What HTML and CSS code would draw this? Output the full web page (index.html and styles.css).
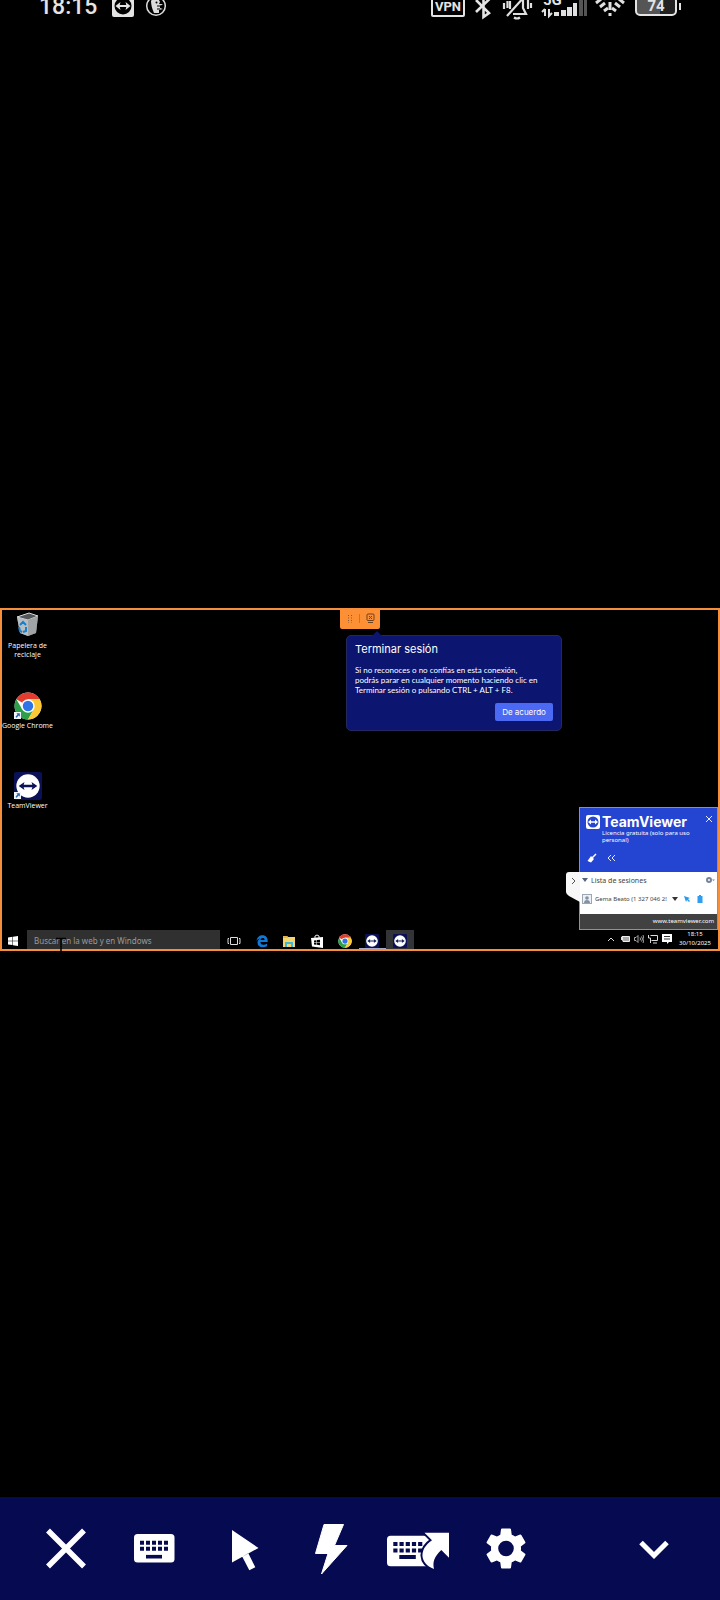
FILE: index.html
```html
<!DOCTYPE html>
<html lang="es">
<head>
<meta charset="utf-8">
<meta name="viewport" content="width=device-width, initial-scale=1">
<title>TeamViewer</title>
<link rel="stylesheet" href="styles.css">
</head>
<body>
<svg class="defs" width="0" height="0" aria-hidden="true">
  <symbol id="chrome" viewBox="0 0 48 48">
    <circle cx="24" cy="24" r="23" fill="#fff"/>
    <path d="M24 24 4 12.500A23 23 0 0 1 44 12.500H24Z" fill="#e33b2e"/>
    <path d="M4 12.500A23 23 0 0 0 24 47L34 29.500 24 24 14 29.500Z" fill="#2c9f48"/>
    <path d="M44 12.500A23 23 0 0 1 24 47L34 29.500 24 12.500Z" fill="#fcc934"/>
    <circle cx="24" cy="24" r="11.500" fill="#fff"/>
    <circle cx="24" cy="24" r="9" fill="#2f74e6"/>
  </symbol>
  <symbol id="tv" viewBox="0 0 48 48">
    <rect width="48" height="48" rx="4" fill="#0b1157"/>
    <circle cx="24" cy="24" r="20" fill="#fff"/>
    <path d="M8 24l10-7-1.500 5h15L30 17l10 7-10 7 1.500-5h-15l1.500 5z" fill="#0b1157"/>
  </symbol>
  <symbol id="shortcut" viewBox="0 0 12 12">
    <rect width="12" height="12" fill="#f2f6fa"/>
    <path d="M4 2h6v6L8 6 4.500 10 2.500 8.500 6 4z" fill="#2462b0"/>
  </symbol>
</svg>

<div class="screen">
  <header class="status">
    <div class="status-row">
      <time class="status-time">18:15</time>
      <svg class="status-tv" viewBox="0 0 22 30" width="22" height="30">
        <rect y="3" width="22" height="22" rx="2" fill="#e4e4e4"/>
        <circle cx="11" cy="14" r="8.500" fill="#000"/>
        <path d="M3.500 14l5-4-.8 3h6.600l-.8-3 5 4-5 4 .8-3H7.700l.8 3z" fill="#e4e4e4"/>
      </svg>
      <svg class="status-duck" viewBox="0 0 22 30" width="22" height="30">
        <circle cx="11" cy="14" r="9.300" fill="none" stroke="#dcdcdc" stroke-width="1.500"/>
        <path d="M9 21C7 17 6 12 6 9c2-4 8-3 9 1l-1 2h4l-3 2v2l3 1-4 1v3z" fill="#dcdcdc"/>
        <circle cx="11.500" cy="10.500" r="1" fill="#000"/>
        <path d="M12 14h4M12 17h3" stroke="#000"/>
      </svg>
      <div class="status-right">
        <span class="vpn">VPN</span>
        <svg viewBox="0 0 24 30" width="24" height="30"><path d="M5 8l13 13-5.500 4V3L18 7.500 5 20" fill="none" stroke="#e4e4e4" stroke-width="2.600"/></svg>
        <svg viewBox="0 0 32 30" width="32" height="30" fill="none" stroke="#e0e0e0" stroke-width="2.200">
          <path d="M6 24 24 4M12 22h13l-3-6V7M9 17V9"/><path d="M13 25.500q3 2 6 0M3 11v6M6.500 9v7M27 8v9M30 11v5"/>
        </svg>
        <span class="signal"><span class="signal-text">5G</span>
          <svg viewBox="0 0 48 30" width="48" height="30" fill="#e0e0e0">
            <path d="M6 17v7M3 20l3-3M10 17v7l3-3" fill="none" stroke="#e0e0e0" stroke-width="2"/>
            <path d="M15 20h5v4h-5zM22 18h5v6h-5zM29 15h4v9h-4z"/><path d="M28 15h5v9h-5zM34 11h4v13h-4z"/><path d="M40 7h4v17h-4zM45 4h3v20h-3z" fill="#555"/>
          </svg></span>
        <svg viewBox="0 0 36 30" width="36" height="30" fill="none" stroke="#e0e0e0">
          <path d="M3 11 8 7M7 15l5-4M11 19l4-3M31 11l-5-4M27 15l-5-4M23 19l-4-3M11 7q6-3 12 0" stroke-width="3"/>
          <path d="M17 10v8M17 21v3" stroke-width="3"/>
        </svg>
        <span class="battery"><span class="battery-body">74</span><span class="battery-nub"></span></span>
      </div>
    </div>
  </header>

  <main class="stage">
    <section class="desktop" aria-label="Escritorio remoto">
      <div class="shortcuts">
        <div class="shortcut">
          <svg viewBox="1 0 28 28" width="28" height="28">
            <path d="M4 5 16 1l9 3-2 17-8 3-8-3z" fill="#8d9194"/>
            <path d="M4 5l11 3 10-4-9-3z" fill="#54585b" stroke="#d7d9da"/>
            <path d="M4 5l11 3v16l-8-3z" fill="#b9bdc0"/>
            <path d="M15 8l10-4-2 17-8 3z" fill="#a1a4a6"/>
            <path d="M7 13l3-3 3 3M13 15v4l-3 1M6 15l1 4 2 1" fill="none" stroke="#1481d0" stroke-width="2"/>
          </svg>
          <span>Papelera de reciclaje</span>
        </div>
        <div class="shortcut">
          <svg viewBox="0 0 28 28" width="28" height="28"><use href="#chrome" width="28" height="28"/><use href="#shortcut" y="20" width="7" height="7"/></svg>
          <span>Google Chrome</span>
        </div>
        <div class="shortcut">
          <svg viewBox="0 0 28 28" width="28" height="28"><use href="#tv" width="28" height="28"/><use href="#shortcut" y="20" width="7" height="7"/></svg>
          <span>TeamViewer</span>
        </div>
      </div>

      <div class="session-tab">
        <svg viewBox="0 0 40 19" width="40" height="19">
          <path d="M8.500 5v8M11.500 5v8" stroke="#8a562f" stroke-dasharray="1 1.500"/>
          <path d="M19.500 4v9" stroke="#c8752f"/>
          <rect x="27" y="4" width="7" height="6.500" rx="1" fill="none" stroke="#6c421e"/>
          <path d="M29 6l3 3M32 6l-3 3M28 12.500h5" stroke="#6c421e"/>
        </svg>
      </div>

      <div class="dialog" role="dialog" aria-labelledby="dialog-title">
        <h1 class="dialog-title" id="dialog-title">Terminar sesión</h1>
        <p class="dialog-text">Si no reconoces o no confías en esta conexión,<br>podrás parar en cualquier momento haciendo clic en<br>Terminar sesión o pulsando CTRL + ALT + F8.</p>
        <button class="dialog-button" type="button">De acuerdo</button>
      </div>

      <aside class="panel">
        <button class="panel-handle" type="button" aria-label="Contraer panel">
          <svg viewBox="0 0 14 30" width="14" height="30"><path d="M0 3q0-3 3-3h11v30L3 24q-3-2-3-4z" fill="#f7f7f7"/><path d="M6 6l3 3-3 3" fill="none" stroke="#555"/></svg>
        </button>
        <div class="panel-head">
          <div class="brand-row">
            <svg viewBox="0 0 14 14" width="14" height="14"><rect width="14" height="14" rx="2" fill="#fff"/><circle cx="7" cy="7" r="5.500" fill="#2747d3"/><path d="M2 7l3-2.500V6.300h4V4.500L12 7 9 9.500V7.700H5v1.800z" fill="#fff"/></svg>
            <strong class="brand">TeamViewer</strong>
            <button class="panel-close" type="button" aria-label="Cerrar"><svg viewBox="0 0 8 8" width="8" height="8"><path d="M1 1l6 6M7 1 1 7" stroke="#e7ebff"/></svg></button>
          </div>
          <p class="license">Licencia gratuita (solo para uso personal)</p>
          <div class="panel-tools">
            <svg viewBox="0 0 10 10" width="10" height="10"><path d="M9 1 5 5" stroke="#fff" stroke-width="1.500"/><path d="M4 3l3 3-3 3.500L.5 8z" fill="#fff"/></svg>
            <svg viewBox="0 0 10 10" width="10" height="10"><path d="M5 2 2 5l3 3M9 2 6 5l3 3" fill="none" stroke="#e7ebff"/></svg>
          </div>
        </div>
        <div class="panel-body">
          <div class="list-head">
            <svg viewBox="0 0 6 6" width="6" height="6"><path d="M0 1h6L3 5z" fill="#52617e"/></svg>
            <span>Lista de sesiones</span>
            <svg class="push" viewBox="0 0 10 8" width="10" height="8"><circle cx="4" cy="4" r="2" fill="none" stroke="#75849c" stroke-width="2"/><path d="M7 3.500h3L8.500 5z" fill="#75849c"/></svg>
          </div>
          <div class="list-item">
            <svg viewBox="0 0 10 10" width="10" height="10"><rect x=".5" y=".5" width="9" height="9" fill="#edf1f5" stroke="#9ba7b3"/><circle cx="5" cy="4" r="1.800" fill="#8292a3"/><path d="M2 9q0-3 3-3t3 3z" fill="#8292a3"/></svg>
            <span class="partner">Gema Beato (1 327 046 2!</span>
            <svg viewBox="0 0 6 6" width="6" height="6"><path d="M0 1h6L3 5z" fill="#333"/></svg>
            <svg viewBox="0 0 8 8" width="8" height="8"><path d="M1 1l6 2-2 1 2 2-1 1-2-2-1 2z" fill="#279be8"/></svg>
            <svg viewBox="0 0 8 8" width="8" height="8"><path d="M1.500 1h5v7h-5z" fill="#2f9df0"/><path d="M3 .5h2" stroke="#2f9df0"/></svg>
          </div>
        </div>
        <a class="panel-foot" href="#">www.teamviewer.com</a>
      </aside>

      <footer class="taskbar">
        <svg class="task-start" viewBox="0 0 10 10" width="10" height="10" fill="#fff"><path d="M0 1.500l4.500-.7v3.900H0zM5 .7 10 0v4.700H5zM0 5.200h4.500v3.900L0 8.500zM5 5.200h5V10l-5-.7z"/></svg>
        <input class="task-search" type="text" aria-label="Buscar" placeholder="Buscar en la web y en Windows">
        <div class="task-apps">
          <span class="app"><svg viewBox="0 0 14 14" width="14" height="14" fill="none" stroke="#ddd"><path d="M3.500 3.500h7v7h-7zM2 4.500H1v5h1M12 4.500h1v5h-1"/></svg></span>
          <span class="app"><svg viewBox="0 0 14 14" width="14" height="14"><path d="M1.500 7C2 3 4.500 1.200 7.500 1.200c3.500 0 5.200 2.500 5.200 5.800v1H5.500c0 3.500 4 3.200 6.500 1.700v2.500C7 14.500 2.500 13 2.500 8.800c0-2 1-3.500 2.800-4.300C3.500 4.700 2.200 5.500 1.500 7zM5.600 6h4C9.600 3.300 5.800 3.500 5.600 6z" fill="#1079d4"/></svg></span>
          <span class="app"><svg viewBox="0 0 14 14" width="14" height="14"><path d="M1 2h4l1 1h7v10H1z" fill="#f4d56f"/><path d="M1 2h4l1 1v1H1z" fill="#e5b646"/><path d="M3 8h8v5H9v-3H5v3H3z" fill="#43b8d2"/></svg></span>
          <span class="app"><svg viewBox="0 0 14 14" width="14" height="14"><path d="M5 4V2q2-2 4 0v2" fill="none" stroke="#eee"/><path d="M1 4l12-1v11L2 12.500z" fill="#fff"/><path d="M4 6.500l2.500-.3v2H4zM7 6.100l3-.3v2.400H7zM4 8.700h2.500v2L4 10.500zM7 8.700h3v2.500l-3-.4z" fill="#000"/></svg></span>
          <span class="app"><svg viewBox="0 0 14 14" width="14" height="14"><use href="#chrome" width="14" height="14"/></svg></span>
          <span class="app app-running"><svg viewBox="0 0 14 14" width="14" height="14"><use href="#tv" width="14" height="14"/></svg></span>
          <span class="app app-active"><svg viewBox="0 0 14 14" width="14" height="14"><use href="#tv" width="14" height="14"/></svg></span>
        </div>
        <div class="tray">
          <svg viewBox="0 0 10 10" width="10" height="10"><path d="M2 7l3-3 3 3" fill="none" stroke="#ddd"/></svg>
          <svg viewBox="0 0 10 10" width="10" height="10"><path d="M1 3h2v3H1z" fill="#ddd"/><path d="M2 2.500h7.500v5H3z" fill="#aaa" stroke="#eee"/></svg>
          <svg viewBox="0 0 10 10" width="10" height="10" fill="none" stroke="#ccc"><path d="M.5 3.500h1.500l2-2v7l-2-2H.5zM6 3.500q1 1.500 0 3M7.500 2.500q2 2.500 0 5M9 1q2 4 0 8" stroke-width=".8"/></svg>
          <svg viewBox="0 0 10 10" width="10" height="10" fill="none" stroke="#ddd"><path d="M2.500 1.500h7v5h-6M5 9h4M.5 1v3h2v5"/></svg>
          <svg viewBox="0 0 10 10" width="10" height="10"><path d="M0 0h10v8H7L5 10V8H0z" fill="#fff"/><path d="M2 2.500h6M2 5h6" stroke="#333"/></svg>
          <time class="clock">18:15<br>30/10/2025</time>
        </div>
      </footer>

      <svg class="caret" viewBox="0 0 10 14" width="10" height="14"><path d="M0 1.500h10M5 1v13" stroke="#000" stroke-width="1.500"/></svg>
    </section>
  </main>

  <nav class="toolbar" aria-label="Herramientas">
    <button class="tool" type="button" aria-label="Cerrar"><svg viewBox="0 0 64 64" width="64" height="64"><path d="M14 14.500l36 36M50 14.500l-36 36" stroke="#fff" stroke-width="5.500"/></svg></button>
    <button class="tool" type="button" aria-label="Teclado"><svg viewBox="0 0 64 64" width="64" height="64"><rect x="12" y="18" width="40.500" height="28.500" rx="3.500" fill="#fff"/><path d="M18 26.800h28M18 32.800h28" stroke="#060a50" stroke-width="4" stroke-dasharray="4 2"/><path d="M24 40.700h16" stroke="#060a50" stroke-width="3.600"/></svg></button>
    <button class="tool" type="button" aria-label="Puntero"><svg viewBox="0 0 64 64" width="64" height="64" fill="#fff"><path d="M22 14v32.500L48.500 32zM32.300 40.700l6-3.400 7 14-6 3z"/></svg></button>
    <button class="tool" type="button" aria-label="Acciones"><svg viewBox="0 0 64 64" width="64" height="64" fill="#fff" stroke="#fff" stroke-width="1" stroke-linejoin="round"><path d="M26 8.500h19.500L36.500 29.500H49L23.500 58l6.500-20.500H17.500z"/></svg></button>
    <button class="tool" type="button" aria-label="Atajos de teclado"><svg viewBox="0 0 64 64" width="64" height="64"><rect x="1" y="19.700" width="42" height="30.500" rx="3.500" fill="#fff"/><path d="M7.300 28h30M7.300 34.500h30" stroke="#060a50" stroke-width="4" stroke-dasharray="4.200 2"/><path d="M13.300 41h16.500" stroke="#060a50" stroke-width="4"/><path d="M38.500 16.700H63v25L55.300 34C48 41 46.500 46 48 53 33 47 33 33 46 24.200z" fill="#fff" stroke="#060a50" stroke-width="4" paint-order="stroke"/></svg></button>
    <button class="tool" type="button" aria-label="Ajustes"><svg viewBox="-4 -4.250 32 32" width="64" height="64" fill="#fff"><path d="M19.430 12.980c.04-.32.07-.64.07-.98s-.03-.66-.07-.98l2.110-1.650c.19-.15.24-.42.12-.64l-2-3.460c-.12-.22-.39-.3-.61-.22l-2.490 1c-.52-.4-1.080-.73-1.690-.98l-.38-2.650C14.460 2.180 14.250 2 14 2h-4c-.25 0-.46.18-.49.42l-.38 2.650c-.61.25-1.170.59-1.690.98l-2.490-1c-.23-.09-.49 0-.61.22l-2 3.460c-.13.22-.07.49.12.64l2.110 1.650c-.04.32-.07.65-.07.98s.03.66.07.98l-2.110 1.650c-.19.15-.24.42-.12.64l2 3.460c.12.22.39.3.61.22l2.490-1c.52.4 1.080.73 1.690.98l.38 2.650c.03.24.24.42.49.42h4c.25 0 .46-.18.49-.42l.38-2.650c.61-.25 1.170-.59 1.690-.98l2.490 1c.23.09.49 0 .61-.22l2-3.460c.12-.22.07-.49-.12-.64l-2.110-1.650zM12 15.900a3.900 3.900 0 1 1 0-7.800 3.900 3.900 0 0 1 0 7.800z"/></svg></button>
    <button class="tool tool-last" type="button" aria-label="Ocultar barra"><svg viewBox="0 0 64 64" width="64" height="64"><path d="M19 26.500l13 13 13-13" fill="none" stroke="#fff" stroke-width="5"/></svg></button>
  </nav>
</div>
</body>
</html>
```
FILE: styles.css
```css
* {
  box-sizing: border-box;
}

body {
  margin: 0;
  background: #000;
  color: #fff;
  font-family: "Noto Sans", "Open Sans", sans-serif;
}

button {
  margin: 0;
  padding: 0;
  border: 0;
  background: none;
  color: inherit;
  font: inherit;
}

svg {
  display: block;
  flex: none;
}

.defs {
  position: absolute;
}

.screen {
  display: flex;
  flex-direction: column;
  min-height: 100vh;
}

/* Phone status bar, partly scrolled under the top edge */
.status {
  height: 61px;
  overflow: hidden;
  font-family: Roboto, sans-serif;
  color: #e4e4e4;
}

.status-row {
  display: flex;
  align-items: center;
  height: 30px;
  margin-top: -8px;
  padding: 0 39px;
}

.status-time {
  font-size: 23px;
  font-weight: 500;
  line-height: 30px;
}

.status-tv {
  margin-left: 15px;
}

.status-duck {
  margin-left: 11px;
}

.status-right {
  display: flex;
  align-items: center;
  gap: 6px;
  margin-left: auto;
}

.vpn {
  width: 34px;
  height: 22px;
  margin-bottom: 3px;
  border: 2px solid #e4e4e4;
  border-radius: 2px;
  font-size: 13px;
  font-weight: 700;
  line-height: 20px;
  text-align: center;
}

.signal {
  position: relative;
}

.signal-text {
  position: absolute;
  top: 1px;
  left: 4px;
  font-size: 15px;
  font-weight: 700;
  line-height: 14px;
}

.battery {
  display: flex;
  align-items: center;
  gap: 2px;
  margin-bottom: 2px;
}

.battery-body {
  width: 42px;
  height: 20px;
  border: 2px solid #e4e4e4;
  border-radius: 5px;
  background: linear-gradient(90deg, #555 60%, #222 60%);
  font-size: 15px;
  font-weight: 700;
  line-height: 17px;
  text-align: center;
}

.battery-nub {
  width: 2px;
  height: 7px;
  background: #e4e4e4;
}

/* Remote desktop */
.stage {
  display: flex;
  flex: 1;
  align-items: center;
}

.desktop {
  position: relative;
  display: flex;
  flex: 1;
  flex-direction: column;
  aspect-ratio: 720 / 343;
  border: 2px solid #f68f3c;
}

.shortcuts {
  display: flex;
  flex: 1;
  flex-direction: column;
  width: 51px;
  padding-top: 2px;
}

.shortcut {
  display: flex;
  flex-direction: column;
  align-items: center;
  gap: 1px;
  height: 80px;
  font-family: "Open Sans", sans-serif;
  font-size: 7px;
  line-height: 9px;
  text-align: center;
}

.session-tab {
  position: absolute;
  top: 0;
  left: 338px;
  border-radius: 0 0 2px 2px;
  background: #fd8f35;
}

.dialog {
  position: absolute;
  top: 25px;
  left: 344px;
  display: flex;
  flex-direction: column;
  width: 216px;
  padding: 7px 8px 9px;
  border: 1px solid #24285d;
  border-radius: 5px;
  background: #0c1570;
  font-family: Inter, sans-serif;
}

.dialog::before {
  content: "";
  position: absolute;
  bottom: 100%;
  left: 25px;
  border: 5px solid transparent;
  border-top-width: 0;
  border-bottom-color: #0c1570;
}

.dialog-title {
  margin: 0;
  font-size: 11px;
  font-weight: 400;
  line-height: 13px;
}

.dialog-text {
  margin: 9px 0 8px;
  font-family: Lato, sans-serif;
  font-size: 8px;
  line-height: 10px;
  white-space: nowrap;
}

.dialog-button {
  align-self: flex-end;
  width: 58px;
  height: 18px;
  border-radius: 2px;
  background: #4b69f3;
  font-size: 8px;
}

.panel {
  position: absolute;
  right: 0;
  bottom: 19px;
  width: 139px;
  border: 1px solid #8f929c;
  background: #fff;
}

.panel-handle {
  position: absolute;
  top: 64px;
  right: 100%;
}

.panel-head {
  height: 64px;
  padding: 7px 4px 0 6px;
  background: #2444d2;
}

.brand-row {
  display: flex;
  align-items: center;
  gap: 2px;
}

.brand {
  font-family: Inter, sans-serif;
  font-size: 14px;
  font-weight: 700;
  line-height: 14px;
}

.panel-close {
  margin: 0 0 6px auto;
}

.license {
  margin: 1px 0 0 16px;
  width: 100px;
  font-size: 6px;
  line-height: 7px;
}

.panel-tools {
  display: flex;
  gap: 9px;
  padding: 9px 0 0 1px;
}

.panel-body {
  height: 42px;
  padding: 2px 2px 0;
  color: #444;
}

.list-head,
.list-item {
  display: flex;
  align-items: center;
  height: 13px;
  gap: 3px;
  font-size: 7px;
}

.list-item {
  gap: 5px;
  margin-top: 6px;
  font-size: 6px;
}

.partner {
  width: 72px;
  margin-left: -2px;
  overflow: hidden;
  white-space: nowrap;
}

.push {
  margin-left: auto;
}

.panel-foot {
  display: block;
  padding-right: 3px;
  background: #414141;
  color: #fff;
  font-size: 6px;
  line-height: 15px;
  text-align: right;
  text-decoration: none;
}

.taskbar {
  display: flex;
  align-items: center;
  height: 19px;
}

.task-start {
  margin: 3px 9px 0 6px;
}

.task-search {
  width: 193px;
  height: 19px;
  padding: 2px 7px 0;
  border: 0;
  border-radius: 0;
  background: #303030;
  font-family: inherit;
  font-size: 8px;
}

.task-search::placeholder {
  color: #9a9a9a;
  opacity: 1;
}

.task-apps {
  display: flex;
  width: 194px;
  height: 100%;
}

.app {
  display: flex;
  flex: 1;
  align-items: center;
  justify-content: center;
  padding-top: 3px;
}

.app-running {
  box-shadow: inset 0 -1px #a8a8c8;
}

.app-active {
  background: #333437;
}

.tray {
  display: flex;
  align-items: center;
  gap: 4px;
  margin-left: auto;
}

.clock {
  width: 38px;
  margin-right: 4px;
  font-size: 6px;
  line-height: 9px;
  text-align: center;
}

.caret {
  position: absolute;
  bottom: -2px;
  left: 54px;
}

/* Session toolbar */
.toolbar {
  display: flex;
  align-items: center;
  height: 103px;
  padding: 0 22px 1px;
  background: #060a50;
}

.tool {
  display: flex;
  flex: 0 1 88px;
  justify-content: center;
}

.tool-last {
  margin-left: auto;
}
```
